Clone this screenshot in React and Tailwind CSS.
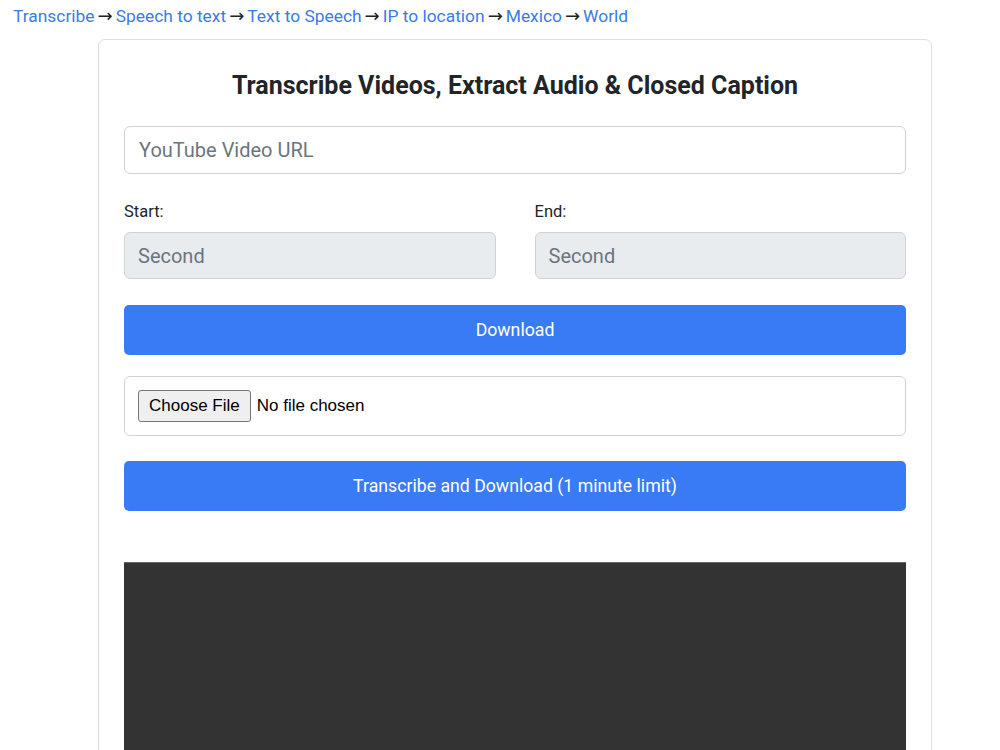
import React from "react";

const links = ["Transcribe", "Speech to text", "Text to Speech", "IP to location", "Mexico", "World"];

export default function App() {
  return (
    <div className="min-h-[750px] bg-white font-['Roboto',sans-serif] text-[#212529]">
      <div className="flex items-center pl-[13px] pt-[5px] h-[26px] text-[17.4px] leading-[22px]">
        {links.map((l, i) => (
          <React.Fragment key={l}>
            {i > 0 && (
              <span className="text-[#222] font-['DejaVu_Sans',sans-serif] text-[18px] leading-[22px] mx-[3px]">→</span>
            )}
            <a className="text-[#3a7be3] cursor-pointer">{l}</a>
          </React.Fragment>
        ))}
      </div>
      <div className="ml-[98px] w-[834px] mt-[13px] border border-[#dedede] rounded-[7px] px-[25px] pt-[29px] pb-[40px]">
        <h1 className="text-center text-[25px] font-bold leading-[34px] text-[#212529]">
          Transcribe Videos, Extract Audio &amp; Closed Caption
        </h1>
        <input
          className="mt-[23px] block w-full h-[48px] border border-[#cfd3d7] rounded-[6px] px-[14px] text-[20px] placeholder:text-[#6c757d] outline-none"
          placeholder="YouTube Video URL"
        />
        <div className="mt-[28px] grid grid-cols-2 gap-x-[39px]">
          <div>
            <label className="block text-[16.5px] leading-[20px]">Start:</label>
            <input
              disabled
              className="mt-[10px] block w-full h-[47px] bg-[#e9ecef] border border-[#cfd3d7] rounded-[6px] px-[13px] text-[20px] placeholder:text-[#6c757d]"
              placeholder="Second"
            />
          </div>
          <div>
            <label className="block text-[16.5px] leading-[20px]">End:</label>
            <input
              disabled
              className="mt-[10px] block w-full h-[47px] bg-[#e9ecef] border border-[#cfd3d7] rounded-[6px] px-[13px] text-[20px] placeholder:text-[#6c757d]"
              placeholder="Second"
            />
          </div>
        </div>
        <button className="mt-[26px] block w-full h-[50px] bg-[#387bf5] text-white text-[17.7px] rounded-[5px]">
          Download
        </button>
        <div className="mt-[21px] flex items-center h-[60px] border border-[#cfd3d7] rounded-[6px] px-[13px] font-['Liberation_Sans',sans-serif] text-[17px]">
          <span className="inline-flex items-center h-[32px] px-[10px] bg-[#efefef] border border-[#767676] rounded-[3px] text-black">
            Choose File
          </span>
          <span className="ml-[6px] text-black">No file chosen</span>
        </div>
        <button className="mt-[25px] block w-full h-[50px] bg-[#387bf5] text-white text-[17.7px] rounded-[5px]">
          Transcribe and Download (1 minute limit)
        </button>
        <div className="mt-[51px] w-full h-[260px] bg-[#333333] border-t border-[#666]" />
      </div>
    </div>
  );
}
